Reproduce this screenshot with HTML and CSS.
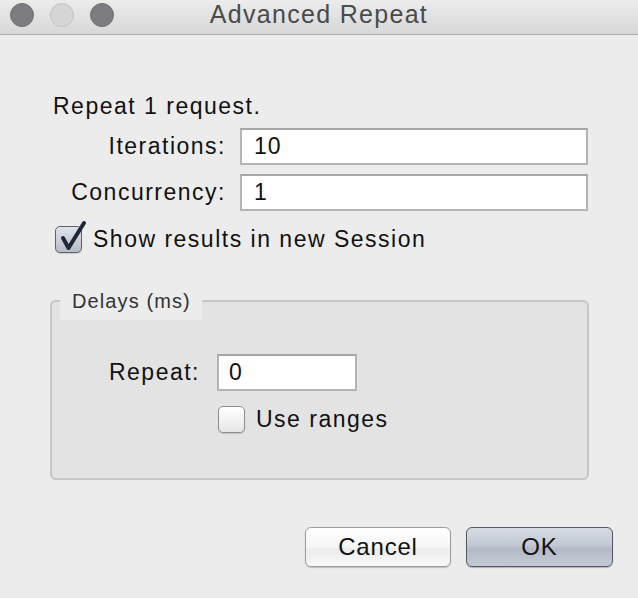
FILE: index.html
```html
<!DOCTYPE html>
<html>
<head>
<meta charset="utf-8">
<link rel="stylesheet" href="styles.css">
</head>
<body>
<div class="window">
  <div class="titlebar">
    <div class="lights">
      <span class="light dark"></span>
      <span class="light pale"></span>
      <span class="light dark"></span>
    </div>
    <div class="title">Advanced Repeat</div>
    <div></div>
  </div>
  <div class="content">
    <div class="intro">Repeat 1 request.</div>
    <div class="form">
      <div class="label">Iterations:</div>
      <div class="field">10</div>
      <div class="label">Concurrency:</div>
      <div class="field">1</div>
    </div>
    <div class="check-row main-check">
      <span class="checkbox checked">
        <svg class="tick" width="32" height="34" viewBox="0 0 32 34"><path d="M7 20 L12.5 30 L28 5" fill="none" stroke="#1f2737" stroke-width="4" stroke-linecap="round" stroke-linejoin="round"/></svg>
      </span>
      <span class="check-label">Show results in new Session</span>
    </div>
    <div class="group">
      <div class="legend">Delays (ms)</div>
      <div class="group-row">
        <div class="label group-label">Repeat:</div>
        <div class="field short">0</div>
      </div>
      <div class="check-row ranges">
        <span class="checkbox"></span>
        <span class="check-label">Use ranges</span>
      </div>
    </div>
    <div class="buttons">
      <div class="btn cancel">Cancel</div>
      <div class="btn ok">OK</div>
    </div>
  </div>
</div>
</body>
</html>
```
FILE: styles.css
```css
* { box-sizing: border-box; }
html, body { margin: 0; padding: 0; }
body {
  width: 638px;
  height: 598px;
  background: #ececec;
  font-family: "Liberation Sans", Arial, sans-serif;
  color: #111;
  overflow: hidden;
}
.window { width: 638px; height: 598px; }
.titlebar {
  height: 35px;
  display: grid;
  grid-template-columns: 1fr auto 1fr;
  align-items: center;
  background: linear-gradient(#ececec, #d7d7d7);
  border-bottom: 1px solid #adadad;
}
.lights {
  display: flex;
  gap: 16px;
  padding-left: 10px;
  margin-top: -4px;
}
.light {
  width: 24px;
  height: 24px;
  border-radius: 50%;
  display: block;
}
.light.dark { background: #7d7d81; border: 1px solid #707074; }
.light.pale { background: #d6d6d6; border: 1px solid #c2c2c2; }
.title {
  font-size: 25px;
  letter-spacing: 1.3px;
  color: #4a4a4a;
  margin-top: -5px;
}
.content {
  padding: 0 25px 0 0;
}
.intro {
  font-size: 23px;
  letter-spacing: 1.5px;
  margin-left: 53px;
  margin-top: 58px;
  line-height: 26px;
}
.form {
  display: grid;
  grid-template-columns: 172px 348px;
  column-gap: 15px;
  row-gap: 9px;
  margin-left: 53px;
  margin-top: 9px;
  align-items: center;
}
.label {
  text-align: right;
  font-size: 23px;
  letter-spacing: 1.5px;
  margin-right: -1px;
}
.field {
  height: 37px;
  background: #fff;
  border: 2px solid #b4b4b4;
  border-top-color: #a6a6a6;
  font-size: 23px;
  letter-spacing: 1px;
  padding-left: 12px;
  line-height: 32px;
}
.check-row {
  display: flex;
  align-items: center;
}
.main-check {
  margin-left: 55px;
  margin-top: 15px;
}
.checkbox {
  position: relative;
  width: 27px;
  height: 27px;
  border-radius: 5px;
  border: 1px solid #8c8c8c;
  background: linear-gradient(#ffffff, #e6e6e6);
  box-shadow: 0 1px 1px rgba(0,0,0,0.15);
  flex: none;
}
.checkbox.checked {
  background: linear-gradient(#dfe3ea, #b6bcc8);
  border-color: #5c6270;
}
.tick {
  position: absolute;
  left: 0;
  top: -9px;
}
.check-label {
  font-size: 23px;
  letter-spacing: 1.5px;
  margin-left: 11px;
}
.group {
  position: relative;
  margin: 47px 0 0 50px;
  width: 539px;
  height: 180px;
  border: 2px solid #c6c6c6;
  border-radius: 6px;
  background: #e3e3e3;
  padding-top: 52px;
}
.legend {
  position: absolute;
  left: 8px;
  top: -16px;
  width: 142px;
  height: 34px;
  background: #ececec;
  font-size: 20px;
  letter-spacing: 1.1px;
  color: #333;
  padding-left: 12px;
  line-height: 30px;
}
.group-row {
  display: flex;
  align-items: center;
  gap: 17px;
}
.group-label {
  width: 148px;
  margin-right: 0;
}
.field.short {
  width: 140px;
  padding-left: 10px;
}
.ranges {
  margin-left: 166px;
  margin-top: 15px;
}
.buttons {
  display: flex;
  justify-content: flex-end;
  gap: 15px;
  margin-top: 47px;
}
.btn {
  height: 40px;
  width: 146px;
  border-radius: 6px;
  font-size: 24px;
  letter-spacing: 0.8px;
  text-align: center;
  line-height: 37px;
}
.btn.cancel {
  background: linear-gradient(#ffffff, #f6f6f6 50%, #ececec 55%, #f8f8f8);
  border: 1px solid #9c9c9c;
  box-shadow: 0 1px 1px rgba(0,0,0,0.2);
}
.btn.ok {
  width: 147px;
  background: linear-gradient(#d6dbe3, #c3c9d3 45%, #b3bac7 55%, #c4cad5);
  border: 1.5px solid #555a64;
  box-shadow: 0 1px 1px rgba(0,0,0,0.25);
}
```
